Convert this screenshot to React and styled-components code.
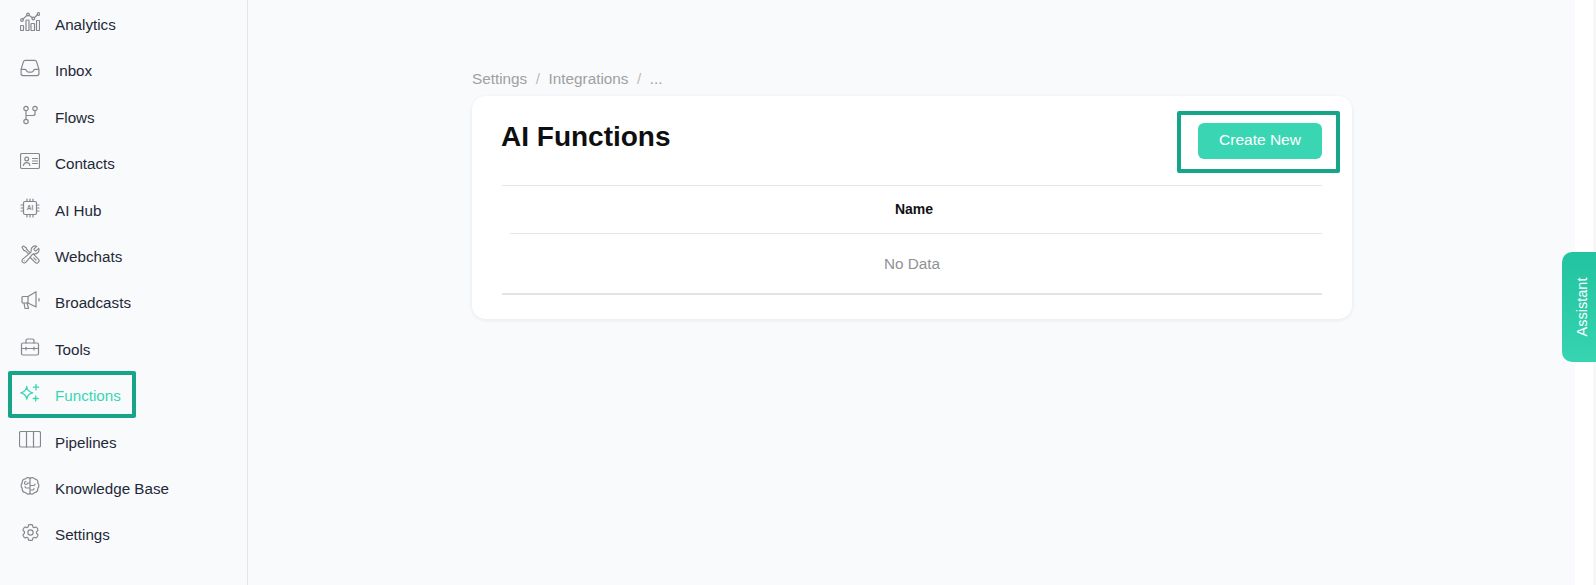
import React from 'react';
import styled, { createGlobalStyle } from 'styled-components';
import {
  HiOutlineInbox,
  HiOutlineWrenchScrewdriver,
  HiOutlineCog6Tooth,
} from 'react-icons/hi2';

const GlobalStyle = createGlobalStyle`
  html, body {
    margin: 0;
    padding: 0;
    height: 100%;
    overflow: hidden;
    background: #f9fafc;
    font-family: 'Liberation Sans', Arial, sans-serif;
  }
`;

const Page = styled.div`
  position: relative;
  display: flex;
  height: 585px;
  width: 1596px;
`;

const Sidebar = styled.nav`
  width: 248px;
  height: 585px;
  flex: none;
  box-sizing: border-box;
  border-right: 1px solid #e4e6ea;
  padding-top: 1.4px;
  display: flex;
  flex-direction: column;
`;

const NavItem = styled.div`
  height: 46.4px;
  display: flex;
  align-items: center;
  font-size: 15.2px;
  color: ${props => (props.$active ? '#3ad6b3' : '#1f2937')};
`;

const IconSlot = styled.span`
  width: 30px;
  height: 24px;
  margin: -5px 10px 0 15px;
  display: flex;
  align-items: center;
  justify-content: center;
  color: ${props => (props.$active ? '#3ad6b3' : '#85878c')};
  flex: none;
`;

const Main = styled.main`
  flex: 1;
  padding: 66px 0 0 224px;
`;

const Crumbs = styled.div`
  display: flex;
  gap: 8.5px;
  height: 26px;
  margin-bottom: 4px;
  align-items: center;
  font-size: 15.3px;
  color: #a0a0a0;
`;

const CrumbSep = styled.span`
  color: #bcbcbc;
`;

const Card = styled.section`
  width: 880px;
  height: 223px;
  box-sizing: border-box;
  background: #fff;
  border-radius: 14px;
  box-shadow: 0 1px 4px rgba(20, 30, 60, 0.08);
  padding: 27px 30px 0;
`;

const CardHead = styled.div`
  display: flex;
  justify-content: space-between;
  height: 62px;
  border-bottom: 1px solid #e6e6e8;
`;

const Title = styled.h1`
  margin: -1px 0 0 -1px;
  font-size: 28px;
  line-height: 30px;
  font-weight: 700;
  color: #0f0f0f;
`;

const CreateButton = styled.button`
  width: 124px;
  height: 36px;
  padding: 0 0 2px;
  border: none;
  border-radius: 6px;
  background: #3ad6b3;
  color: #fff;
  font-family: inherit;
  font-size: 15.5px;
`;

const HeaderRow = styled.div`
  margin-left: 8px;
  padding: 0 4px 2px 0;
  box-sizing: border-box;
  height: 48px;
  display: flex;
  align-items: center;
  justify-content: center;
  border-bottom: 1px solid #e6e6e8;
  font-size: 14px;
  font-weight: 700;
  color: #111;
`;

const EmptyRow = styled.div`
  height: 59px;
  display: flex;
  align-items: center;
  justify-content: center;
  border-bottom: 2px solid #e3e4ea;
  font-size: 15.3px;
  color: #8f9296;
`;

const Gutter = styled.div`
  width: 21px;
  flex: none;
  box-sizing: border-box;
  background: #fff;
  border-right: 3px solid #f7f7f8;
`;

const Highlight = styled.div`
  position: absolute;
  box-sizing: border-box;
  border: 4px solid #17a589;
  border-radius: 2px;
  pointer-events: none;
`;

const FunctionsHighlight = styled(Highlight)`
  left: 8px;
  top: 371px;
  width: 128px;
  height: 47px;
`;

const CreateHighlight = styled(Highlight)`
  left: 1177px;
  top: 111px;
  width: 163px;
  height: 62px;
`;

const AssistantTab = styled.div`
  position: absolute;
  right: 0;
  top: 252px;
  width: 34px;
  height: 110px;
  box-sizing: border-box;
  padding-left: 6px;
  border-radius: 10px 0 0 10px;
  background: linear-gradient(180deg, #22c3a0, #36d4b1);
  color: #fff;
  font-size: 14.5px;
  display: flex;
  align-items: center;
  justify-content: center;
`;

const AssistantLabel = styled.span`
  transform: rotate(-90deg);
  white-space: nowrap;
`;

const Svg = ({ w = 20, h = 20, sw = 1.2, children }) => (
  <svg width={w} height={h} viewBox={`0 0 ${w} ${h}`} fill="none" stroke="currentColor" strokeWidth={sw} strokeLinecap="round" strokeLinejoin="round">
    {children}
  </svg>
);

const AnalyticsIcon = () => (
  <Svg>
    <rect x="0.500" y="13.500" width="3" height="5" rx="0.600" />
    <rect x="6" y="8" width="3" height="10.500" rx="0.600" />
    <rect x="11" y="11.500" width="3.500" height="7" rx="0.600" />
    <rect x="16.500" y="8.500" width="3" height="10" rx="0.600" />
    <circle cx="2" cy="8" r="1.300" />
    <circle cx="8" cy="2.500" r="1.300" />
    <circle cx="13.300" cy="6.500" r="1.300" />
    <circle cx="18.500" cy="2" r="1.300" />
    <path d="M3 7 7 3.400M9 3.300l3.300 2.500M14.300 5.700 17.500 2.800" />
  </Svg>
);

const FlowsIcon = () => (
  <Svg>
    <circle cx="6" cy="3.500" r="2.200" />
    <circle cx="6" cy="16.500" r="2.200" />
    <circle cx="15" cy="3.500" r="2.200" />
    <path d="M6 5.700v8.600M15 5.700V8.500a2 2 0 0 1-2 2H6" />
  </Svg>
);

const ContactsIcon = () => (
  <Svg>
    <rect x="0.500" y="2.500" width="19" height="15" rx="1.500" />
    <circle cx="6.700" cy="8" r="1.900" />
    <path d="M3.500 14.500c.3-2 1.500-2.900 3.200-2.900s2.900.9 3.200 2.900M12.500 7.500h5M12.500 10h5M12.500 12.500h5" />
  </Svg>
);

const ChipText = styled.text`
  font-family: 'Liberation Sans', Arial, sans-serif;
  font-size: 6.500px;
  font-weight: 700;
  fill: currentColor;
  stroke: none;
`;

const ChipIcon = () => (
  <Svg>
    <rect x="3.500" y="3.500" width="13" height="13" rx="1.500" />
    <path d="M7 1v2.500M10 1v2.500M13 1v2.500M7 16.500V19M10 16.500V19M13 16.500V19M1 7h2.500M1 10h2.500M1 13h2.500M16.500 7H19M16.500 10H19M16.500 13H19" />
    <ChipText x="10" y="12.400" textAnchor="middle">AI</ChipText>
  </Svg>
);

const MegaphoneIcon = () => (
  <Svg>
    <path d="M3 6.500h5L16 1.800v15.200l-8-4H3a1 1 0 0 1-1-1v-4.500a1 1 0 0 1 1-1z" />
    <path d="M4 13l1 5.500h3.500L7 13M8 6.500V13M19 8.500v2.500" />
  </Svg>
);

const ToolboxIcon = () => (
  <Svg>
    <rect x="1.500" y="6" width="17" height="12" rx="1.500" />
    <path d="M6 6V3.500a1.500 1.500 0 0 1 1.500-1.500h5A1.500 1.500 0 0 1 14 3.500V6M1.500 11.500h17M6 10v3M14 10v3" />
  </Svg>
);

const SparkIcon = () => (
  <Svg sw={1.3}>
    <path d="M6.700 3.500c.4 3.500 2.300 5.500 6 6.300-3.700.8-5.600 2.800-6 6.300-.4-3.500-2.300-5.500-6-6.300 3.700-.8 5.600-2.800 6-6.300z" />
    <path d="M16 1.500v5.400M13.300 4.200h5.400M15.700 13v5M13.200 15.500h5" />
  </Svg>
);

const PipelinesIcon = () => (
  <Svg w={22} h={17}>
    <rect x="0.500" y="0.500" width="21" height="15.500" rx="1.500" />
    <path d="M7.500.5V16M14.500.5V16" />
  </Svg>
);

const BrainIcon = () => (
  <Svg>
    <path d="M10 2.500C9 1.200 6.500 1.200 5.500 2.800 3.200 3 1.800 5 2.200 7 .8 8.500.8 11 2.200 12.300c-.2 2.200 1.300 4 3.300 4.200 1 1.800 3.500 2.200 4.500.8 1 1.400 3.500 1 4.500-.8 2-.2 3.500-2 3.300-4.200 1.400-1.300 1.400-3.800 0-5.300.4-2-1-4-3.300-4.200C13.500 1.200 11 1.200 10 2.500z" />
    <path d="M10 2.500v14.800M10 7H7.500M7.500 7a1.500 1.500 0 1 1-1.500-1.500M10 12H6.500a1.500 1.500 0 0 1-1.500-1.500M10 9.500h3.500a1.500 1.500 0 0 0 1.500-1.500M10 14h2.500a1.500 1.500 0 0 0 1.500-1.500" />
  </Svg>
);

const navItems = [
  { label: 'Analytics', icon: <AnalyticsIcon /> },
  { label: 'Inbox', icon: <HiOutlineInbox size={22} strokeWidth={1.3} /> },
  { label: 'Flows', icon: <FlowsIcon /> },
  { label: 'Contacts', icon: <ContactsIcon /> },
  { label: 'AI Hub', icon: <ChipIcon /> },
  { label: 'Webchats', icon: <HiOutlineWrenchScrewdriver size={21} strokeWidth={1.3} /> },
  { label: 'Broadcasts', icon: <MegaphoneIcon /> },
  { label: 'Tools', icon: <ToolboxIcon /> },
  { label: 'Functions', icon: <SparkIcon />, active: true },
  { label: 'Pipelines', icon: <PipelinesIcon /> },
  { label: 'Knowledge Base', icon: <BrainIcon /> },
  { label: 'Settings', icon: <HiOutlineCog6Tooth size={21} strokeWidth={1.3} /> },
];

export default function App() {
  return (
    <Page>
      <GlobalStyle />
      <Sidebar>
        {navItems.map(item => (
          <NavItem key={item.label} $active={item.active}>
            <IconSlot $active={item.active}>{item.icon}</IconSlot>
            {item.label}
          </NavItem>
        ))}
      </Sidebar>
      <Main>
        <Crumbs>
          <span>Settings</span>
          <CrumbSep>/</CrumbSep>
          <span>Integrations</span>
          <CrumbSep>/</CrumbSep>
          <span>...</span>
        </Crumbs>
        <Card>
          <CardHead>
            <Title>AI Functions</Title>
            <CreateButton>Create New</CreateButton>
          </CardHead>
          <HeaderRow>Name</HeaderRow>
          <EmptyRow>No Data</EmptyRow>
        </Card>
      </Main>
      <Gutter />
      <FunctionsHighlight />
      <CreateHighlight />
      <AssistantTab>
        <AssistantLabel>Assistant</AssistantLabel>
      </AssistantTab>
    </Page>
  );
}
